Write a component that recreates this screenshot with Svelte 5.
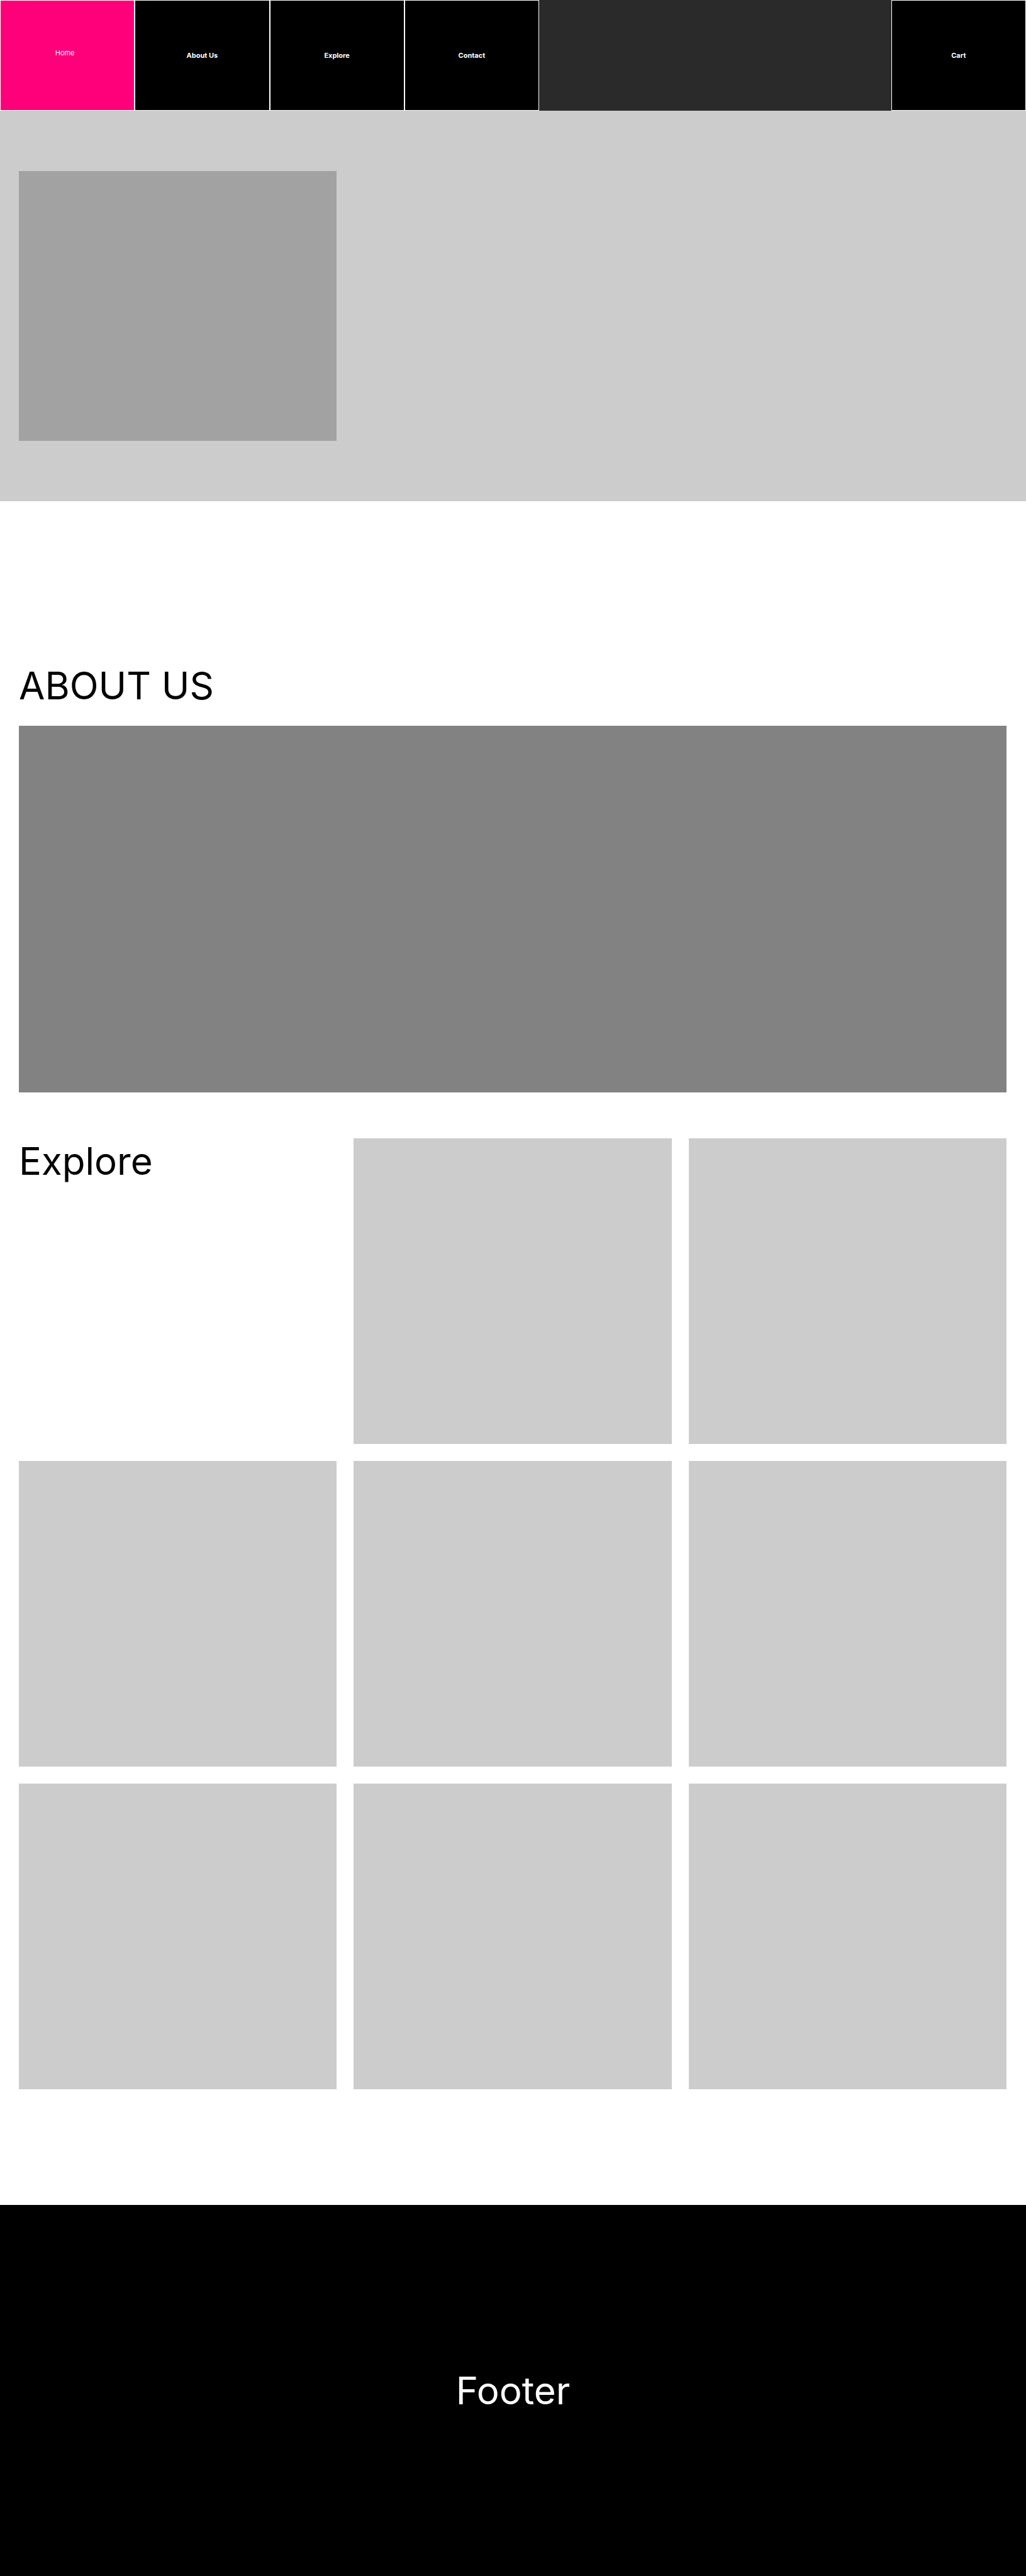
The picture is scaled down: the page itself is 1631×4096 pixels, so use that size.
<script>
  const links = [
    { label: 'Home', href: '#home', active: true },
    { label: 'About Us', href: '#about' },
    { label: 'Explore', href: '#explore' },
    { label: 'Contact', href: '#contact' },
  ];
  const items = Array.from({ length: 8 }, (_, i) => i);
</script>

<nav class="nav" aria-label="Main">
  {#each links as link}
    <a class="tab" class:active={link.active} href={link.href} aria-current={link.active ? 'page' : undefined}>{link.label}</a>
  {/each}
  <div class="spacer"></div>
  <a class="tab" href="#cart">Cart</a>
</nav>

<main>
  <section class="hero columns" id="home">
    <div class="feature"></div>
  </section>

  <section class="about" id="about">
    <h2>ABOUT US</h2>
    <div class="panel"></div>
  </section>

  <section class="explore columns" id="explore">
    <h2>Explore</h2>
    {#each items as item (item)}
      <article class="card"></article>
    {/each}
  </section>
</main>

<footer id="contact">
  <p>Footer</p>
</footer>

<style>
  :global(body) {
    margin: 0;
    background: #fff;
    color: #000;
    font-family: Inter, 'Liberation Sans', sans-serif;
  }

  .nav {
    display: grid;
    grid-template-columns: repeat(4, 227fr) 593fr 227fr;
    min-height: 176px;
    background: #2a2a2a;
  }

  .tab {
    display: flex;
    align-items: center;
    justify-content: center;
    box-sizing: border-box;
    border: 1px solid #fff;
    background: #000;
    color: #fff;
    font-size: 11px;
    font-weight: 700;
    line-height: 14px;
    text-decoration: none;
  }

  .tab.active {
    padding: 0 8px 8px 0;
    background: #ff007a;
    font-weight: 400;
  }

  .columns {
    display: grid;
    grid-template-columns: repeat(3, 1fr);
    gap: 27px;
  }

  .hero {
    padding: 96px 31px 96px 30px;
    background: #ccc;
  }

  .feature {
    min-height: 429px;
    background: #a2a2a2;
  }

  h2,
  footer p {
    margin: 0;
    font-size: 60px;
    font-weight: 400;
    line-height: 73px;
  }

  .about {
    display: flex;
    flex-direction: column;
    gap: 27px;
    padding: 257px 31px 73px 30px;
  }

  .panel {
    min-height: 583px;
    background: #828282;
  }

  .explore {
    padding: 0 31px 184px 30px;
  }

  .card {
    min-height: 486px;
    background: #ccc;
  }

  footer {
    display: grid;
    place-items: center;
    min-height: 590px;
    background: #000;
    color: #fff;
  }
</style>
